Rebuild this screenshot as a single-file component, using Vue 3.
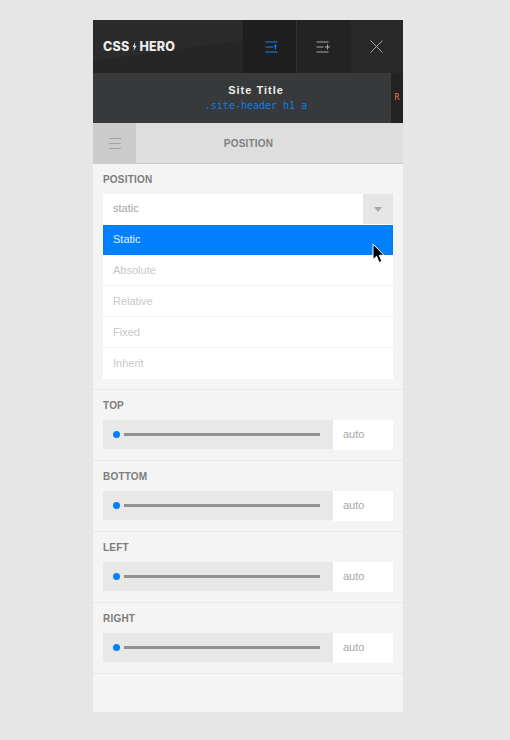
<template>
  <div class="page">
    <div class="panel">
      <header class="topbar">
        <div class="logo">CSS<svg class="bolt" width="5" height="9" viewBox="0 0 5 9"><path d="M3.2 0 L0.6 4.9 H2.1 L1.6 9 L4.6 3.7 H2.9 Z" fill="#d8d8d8" /></svg>HERO</div>
        <button class="tab tab-active">
          <svg width="13" height="12" viewBox="0 0 13 12" fill="none" stroke="#0a84ff" stroke-width="1">
            <path d="M0.5 1 H12.5 M0.5 6 H8.5 M0.5 11 H12.5" />
            <path d="M10.5 8.5 V3.5 M9 5 H12" />
          </svg>
        </button>
        <button class="tab tab-add">
          <svg width="15" height="12" viewBox="0 0 15 12" fill="none" stroke="#a6a6a6" stroke-width="1">
            <path d="M0.5 1 H12.5 M0.5 6 H7.5 M0.5 11 H12.5" />
            <path d="M11.5 3.5 V8.5 M9 6 H14" />
          </svg>
        </button>
        <button class="tab tab-close">
          <svg width="13" height="13" viewBox="0 0 13 13" fill="none" stroke="#a6a6a6" stroke-width="1">
            <path d="M0.5 0.5 L12.5 12.5 M12.5 0.5 L0.5 12.5" />
          </svg>
        </button>
      </header>

      <div class="titlebar">
        <div class="title-box">
          <div class="site-title">Site Title</div>
          <div class="selector">.site-header h1 a</div>
        </div>
        <div class="side-strip">R</div>
      </div>

      <div class="subhead">
        <button class="menu-btn">
          <svg width="12" height="11" viewBox="0 0 12 11" fill="none" stroke="#a3a3a3" stroke-width="1">
            <path d="M0 0.5 H12 M0 5.5 H12 M0 10.5 H12" />
          </svg>
        </button>
        <div class="subhead-title">POSITION</div>
      </div>

      <section class="group group-select">
        <div class="label">POSITION</div>
        <div class="select">
          <span class="select-value">static</span>
          <span class="select-arrow"></span>
        </div>
        <ul class="options">
          <li v-for="(opt, i) in options" :key="opt" :class="{ selected: i === 0 }">{{ opt }}</li>
        </ul>
        <svg class="cursor" width="14" height="21" viewBox="0 0 14 21">
          <path d="M1 1 V16.5 L4.6 13.2 L7 19.5 L9.8 18.3 L7.3 12.3 H12 Z" fill="#000" stroke="#fff" stroke-width="1" />
        </svg>
      </section>

      <section v-for="s in sliders" :key="s" class="group">
        <div class="label">{{ s }}</div>
        <div class="slider-row">
          <div class="slider">
            <span class="dot"></span>
            <span class="track"></span>
          </div>
          <div class="value">auto</div>
        </div>
      </section>

      <div class="panel-end"></div>
    </div>
  </div>
</template>

<script setup>
const options = ['Static', 'Absolute', 'Relative', 'Fixed', 'Inherit']
const sliders = ['TOP', 'BOTTOM', 'LEFT', 'RIGHT']
</script>

<style>
html, body {
  margin: 0;
  background: #e6e6e6;
}
</style>

<style scoped>
.page {
  width: 510px;
  height: 740px;
  padding-top: 20px;
  box-sizing: border-box;
  background: #e6e6e6;
  font-family: "Liberation Sans", Arial, sans-serif;
  overflow: hidden;
}

.panel {
  width: 310px;
  margin-left: 93px;
  height: 692px;
  background: #f4f4f4;
  display: flex;
  flex-direction: column;
}

.topbar {
  height: 53px;
  display: flex;
  background: linear-gradient(172deg, #2b2b2b 0, #2b2b2b 42%, #262626 43%, #262626 100%);
}

.logo {
  width: 150px;
  box-sizing: border-box;
  padding-left: 10px;
  display: flex;
  align-items: center;
  color: #ececec;
  font-family: Inter, "Liberation Sans", sans-serif;
  font-size: 12.5px;
  font-weight: 800;
  letter-spacing: 0.2px;
}

.bolt {
  margin: 0 2px 0 3px;
}

.tab {
  border: 0;
  padding: 0;
  background: none;
  display: flex;
  align-items: center;
  justify-content: center;
}

.tab-active {
  width: 54px;
  padding-left: 3px;
  box-sizing: border-box;
  background: #1f1f1f;
  border-right: 1px solid #333;
}

.tab-add {
  width: 53px;
  background: #232323;
}

.tab-close {
  width: 53px;
  background: #282828;
}

.titlebar {
  height: 50px;
  display: flex;
  background: #232323;
}

.title-box {
  width: 298px;
  background: #37393b;
  text-align: center;
  padding-top: 11px;
  box-sizing: border-box;
}

.site-title {
  color: #eee;
  font-size: 11px;
  font-weight: bold;
  letter-spacing: 1px;
  line-height: 13px;
  padding-left: 28px;
}

.selector {
  color: #0a7fe8;
  font-family: "DejaVu Sans Mono", monospace;
  font-size: 10px;
  line-height: 14px;
  margin-top: 2px;
  padding-left: 28px;
}

.side-strip {
  flex: 1;
  color: #f0705c;
  font-family: "DejaVu Sans Mono", monospace;
  font-size: 8px;
  line-height: 50px;
  text-align: center;
  box-sizing: border-box;
}

.subhead {
  height: 41px;
  display: flex;
  background: #dedede;
  border-bottom: 1px solid #ccc;
  box-sizing: border-box;
}

.menu-btn {
  width: 43px;
  border: 0;
  padding: 0;
  background: #cbcbcb;
  display: flex;
  align-items: center;
  justify-content: center;
}

.subhead-title {
  width: 225px;
  text-align: center;
  color: #808080;
  font-size: 10px;
  font-weight: bold;
  line-height: 41px;
  letter-spacing: 0.2px;
}

.group {
  position: relative;
  height: 71px;
  box-sizing: border-box;
  padding: 10px 10px 0;
  border-bottom: 1px solid #e8e8e8;
}

.group-select {
  height: 226px;
}

.label {
  color: #7d7d7d;
  font-size: 10px;
  font-weight: bold;
  line-height: 12px;
  letter-spacing: 0.2px;
  margin-bottom: 8px;
}

.select {
  height: 31px;
  display: flex;
  background: #fff;
}

.select-value {
  flex: 1;
  padding-left: 10px;
  color: #a3a3a3;
  font-size: 11px;
  line-height: 29px;
}

.select-arrow {
  width: 30px;
  height: 30px;
  background: #e6e6e6;
  position: relative;
}

.select-arrow::after {
  content: "";
  position: absolute;
  left: 11px;
  top: 13px;
  border-style: solid;
  border-width: 5px 4px 0;
  border-color: #a8a8a8 transparent transparent;
}

.options {
  list-style: none;
  margin: 0;
  padding: 0;
  background: #fff;
}

.options li {
  height: 31px;
  box-sizing: border-box;
  padding-left: 10px;
  color: #c8c8c8;
  font-size: 11px;
  line-height: 31px;
  border-bottom: 1px solid #f3f3f3;
}

.options li:last-child {
  border-bottom: 0;
}

.options li.selected {
  height: 30px;
  line-height: 29px;
  background: #0080ff;
  color: #e4f1ff;
  border-bottom: 0;
}

.cursor {
  position: absolute;
  left: 279px;
  top: 79px;
}

.slider-row {
  display: flex;
}

.slider {
  width: 230px;
  height: 29px;
  background: #e8e8e8;
  display: flex;
  align-items: center;
  padding-left: 10px;
  box-sizing: border-box;
}

.dot {
  width: 7px;
  height: 7px;
  border-radius: 50%;
  background: #0080ff;
}

.track {
  width: 196px;
  height: 3px;
  margin-left: 4px;
  background: #919191;
}

.value {
  width: 60px;
  height: 30px;
  box-sizing: border-box;
  background: #fff;
  padding-left: 10px;
  color: #a6a6a6;
  font-size: 11px;
  line-height: 29px;
}

.panel-end {
  flex: 1;
}
</style>
